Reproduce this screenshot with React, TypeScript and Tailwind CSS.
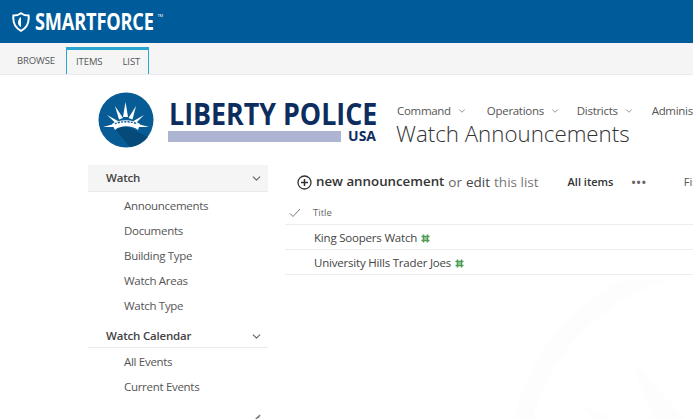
import { ChevronDown } from 'lucide-react';

const font = { fontFamily: '"Open Sans", "Noto Sans", sans-serif' };

const watchLinks = ['Announcements', 'Documents', 'Building Type', 'Watch Areas', 'Watch Type'];
const calendarLinks = ['All Events', 'Current Events'];
const topNav = ['Command', 'Operations', 'Districts'];
const rows = ['King Soopers Watch', 'University Hills Trader Joes'];

function Shield() {
  return (
    <svg width="18" height="20" viewBox="0 0 18 20" fill="none">
      <path d="M9 1.2 C11.5 3 14 3.6 16.6 3.6 C17.2 9.5 15.6 15.5 9 18.8 C2.4 15.5 0.8 9.5 1.4 3.6 C4 3.6 6.5 3 9 1.2 Z" stroke="#fff" strokeWidth="2" />
      <path d="M9 5 C7 6.2 6 8.5 6 10.5 C6 12.5 7.2 14 9 15 Z" fill="#fff" />
    </svg>
  );
}

function Seal() {
  return (
    <svg width="56" height="56" viewBox="0 0 56 56" className="shrink-0">
      <circle cx="28" cy="28" r="27.5" fill="#075c95" />
      <path d="M17 37 L28 34 L50 45 A27.5 27.5 0 0 1 32 55 Z" fill="#064a7a" />
      <g fill="#fff">
        <path d="M27.5 10 L30 25 L25 25 Z" />
        <path d="M17 14 L25 26 L21 27.5 Z" />
        <path d="M38 14 L34.5 27.5 L30.5 26 Z" />
        <path d="M9 23 L20 29 L17.5 31 Z" />
        <path d="M46 23 L38 31 L35.5 29 Z" />
        <path d="M5 35 L16 32 L18 35 Z" />
        <path d="M51 35 L38 35 L40 32 Z" />
        <path d="M14 32 C20 27 35 27 42 32 L40 38 C34 33 22 33 17 38 Z" />
      </g>
      <path d="M17 32 C22 29 34 29 39 32" stroke="#075c95" strokeWidth="1.4" strokeDasharray="2 1.2" fill="none" />
    </svg>
  );
}

function Spark() {
  return (
    <svg width="9" height="9" viewBox="0 0 9 9" className="ml-[4px] shrink-0">
      <path d="M2.5 0.5V8.5M6.5 0.5V8.5M0.5 2.5H8.5M0.5 6.5H8.5" stroke="#4f9a55" strokeWidth="1.5" />
      <rect x="3" y="3" width="3" height="3" fill="#8fc494" />
    </svg>
  );
}

function NavGroup({ title, links, shaded }: { title: string; links: string[]; shaded?: boolean }) {
  return (
    <div>
      <div className={`flex items-center justify-between border-b border-[#e9e9e9] pl-[18px] pr-[5px] text-[11.5px] font-semibold tracking-[-0.2px] text-[#444] ${shaded ? 'h-[27px] bg-[#f5f5f5]' : 'h-[25px] pt-[2px]'}`}>
        <span>{title}</span>
        <ChevronDown size={13} strokeWidth={2} className="text-[#666]" />
      </div>
      <ul className="pl-[36px] pt-[1px]">
        {links.map((l) => (
          <li key={l} className="flex h-[25px] items-center text-[11.5px] tracking-[-0.3px] text-[#555]">{l}</li>
        ))}
      </ul>
    </div>
  );
}

export default function App() {
  return (
    <div style={font} className="relative h-[419px] w-[693px] overflow-hidden bg-white">
      {/* faint watermark behind the page */}
      <svg width="213" height="139" viewBox="0 0 213 139" className="absolute left-[480px] top-[280px]" fill="#fdfdfd">
        <path d="M35 139 C45 90 75 35 143 0 L187 0 C130 20 75 60 53 139 Z" />
        <path d="M152 82 L205 139 L173 139 Z" />
        <path d="M100 125 L135 139 L115 139 Z" />
      </svg>

      <header className="flex h-[43px] items-center bg-[#005b9a] pl-[12px]">
        <Shield />
        <span className="ml-[5px] origin-left scale-x-[0.79] text-[23px] font-bold tracking-[-0.2px] text-white">SMARTFORCE</span>
        <span className="ml-[-28px] mb-[11px] text-[4px] text-white">TM</span>
      </header>

      <div className="flex h-[32px] items-end border-b border-[#eaeaea] bg-[#f5f5f5] pl-[17px] text-[9.5px] tracking-[-0.1px] text-[#555]">
        <span className="flex h-[26px] items-center">BROWSE</span>
        <div className="relative ml-[11px] flex h-[27px] w-[83px] items-center gap-[20px] border-x border-t-[3px] border-[#2aa5cf] pl-[9px]">
          <span>ITEMS</span>
          <span>LIST</span>
        </div>
      </div>

      <div className="relative flex pl-[98px] pt-[17px]">
        <Seal />
        <div className="ml-[15px] w-[208px] shrink-0 pt-[8px]">
          <div className="h-[26px] origin-left scale-x-[0.865] whitespace-nowrap text-[31px] font-bold leading-[26px] text-[#0d2d5e]">
            LIBERTY POLICE
          </div>
          <div className="mt-[3px] flex items-center justify-between">
            <div className="ml-[-1px] h-[11px] w-[173px] bg-[#aeb5d3]" />
            <span className="mr-[1px] text-[14px] font-bold leading-[14px] text-[#0d2d5e]">USA</span>
          </div>
        </div>
        <div className="ml-[20px] shrink-0 pt-[9px]">
          <nav className="flex h-[20px] items-center gap-[17px] whitespace-nowrap text-[11.5px] tracking-[-0.3px] text-[#555]">
            {topNav.map((n) => (
              <span key={n} className="flex items-center gap-[6px] first:mr-[3px]">
                {n}
                <ChevronDown size={10} strokeWidth={1.5} />
              </span>
            ))}
            <span className="ml-[1px]">Administration</span>
          </nav>
          <h1 className="ml-[-1px] mt-[-2px] whitespace-nowrap text-[22.3px] font-light leading-[30px] text-[#333]">Watch Announcements</h1>
        </div>
      </div>

      <div className="relative flex pl-[88px] pt-[16px]">
        <aside className="w-[180px] shrink-0">
          <NavGroup title="Watch" links={watchLinks} shaded />
          <div className="mt-[5px]">
            <NavGroup title="Watch Calendar" links={calendarLinks} />
          </div>
        </aside>

        <main className="ml-[17px] mt-[2px] flex-1">
          <div className="flex h-[30px] items-center whitespace-nowrap pl-[12px]">
            <svg width="15" height="15" viewBox="0 0 15 15" fill="none" stroke="#333" className="shrink-0">
              <circle cx="7.5" cy="7.5" r="6.5" strokeWidth="1.3" />
              <path d="M7.5 4V11M4 7.5H11" strokeWidth="1.5" />
            </svg>
            <span className="ml-[4px] text-[13.3px] font-semibold text-[#333]">new announcement</span>
            <span className="ml-[4px] text-[13.5px] text-[#666]">or</span>
            <span className="ml-[4px] text-[13.5px] text-[#444]">edit</span>
            <span className="ml-[4px] text-[13.5px] text-[#777]">this list</span>
            <span className="ml-[29px] text-[11px] font-semibold text-[#333]">All items</span>
            <span className="ml-[18px] text-[11px] font-bold tracking-[1px] text-[#666]">•••</span>
            <span className="ml-[37px] text-[11px] text-[#555]">Find an item</span>
          </div>
          <div className="flex h-[28px] items-center border-b border-[#ececec] pt-[5px] text-[9.5px] text-[#666]">
            <svg width="12" height="10" viewBox="0 0 12 10" fill="none" stroke="#777" strokeWidth="1" className="ml-[4px]">
              <path d="M1 5.5L4 8.5L11 1" />
            </svg>
            <span className="ml-[12px]">Title</span>
          </div>
          {rows.map((r) => (
            <div key={r} className="flex h-[25px] items-center border-b border-[#ececec] pl-[29px] pt-[2px] text-[11.5px] tracking-[-0.2px] text-[#444]">
              {r}
              <Spark />
            </div>
          ))}
        </main>
      </div>

      {/* edit links pencil, cut off by the window */}
      <svg width="6" height="5" viewBox="0 0 6 5" className="absolute left-[255px] top-[414px]">
        <path d="M0 5L3 2L5 0.5L5.5 1.5L4 3.5L2 5Z" fill="#777" />
      </svg>
    </div>
  );
}
